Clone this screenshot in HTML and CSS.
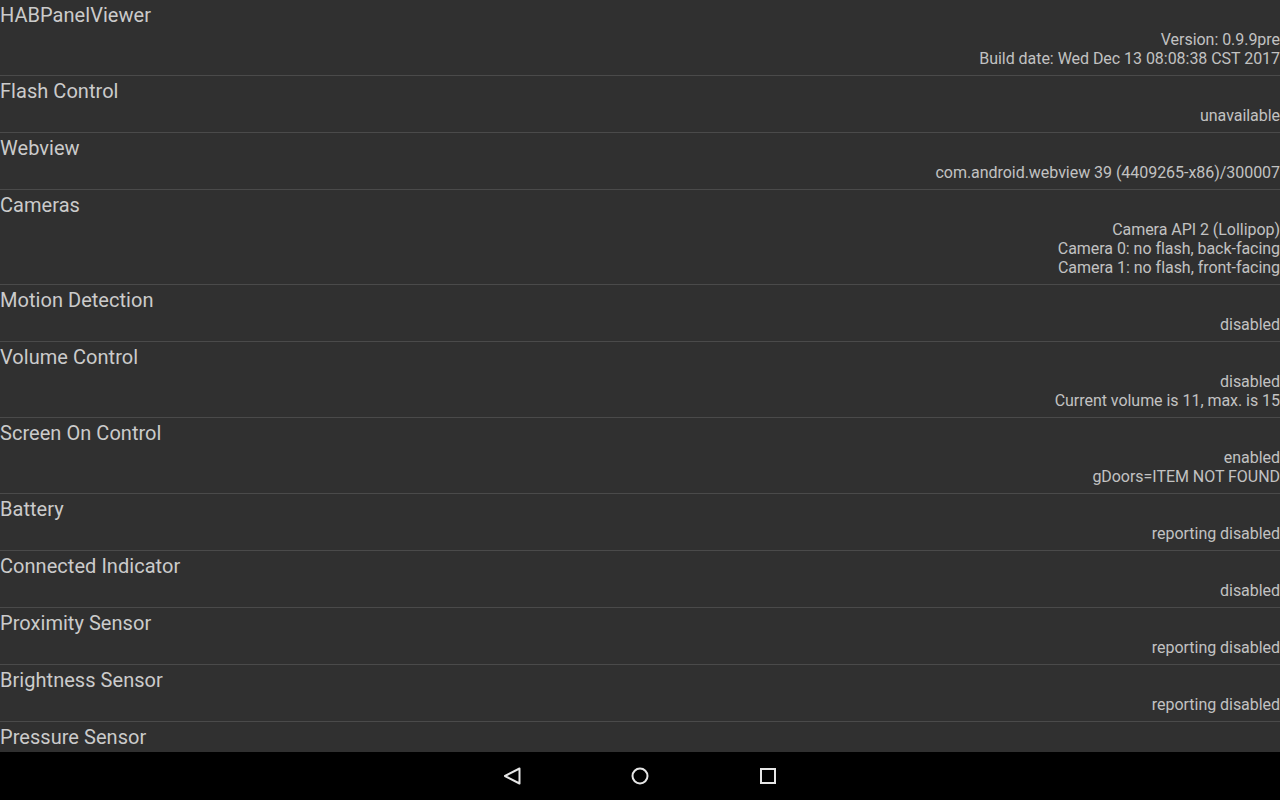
FILE: index.html
```html
<!DOCTYPE html>
<html>
<head>
<meta charset="utf-8">
<link rel="stylesheet" href="styles.css">
</head>
<body>
<div class="screen">
  <div class="list">
    <div class="row">
      <div class="title">HABPanelViewer</div>
      <div class="sub">Version: 0.9.9pre</div>
      <div class="sub">Build date: Wed Dec 13 08:08:38 CST 2017</div>
    </div>
    <div class="row">
      <div class="title">Flash Control</div>
      <div class="sub">unavailable</div>
    </div>
    <div class="row">
      <div class="title">Webview</div>
      <div class="sub">com.android.webview 39 (4409265-x86)/300007</div>
    </div>
    <div class="row">
      <div class="title">Cameras</div>
      <div class="sub">Camera API 2 (Lollipop)</div>
      <div class="sub">Camera 0: no flash, back-facing</div>
      <div class="sub">Camera 1: no flash, front-facing</div>
    </div>
    <div class="row">
      <div class="title">Motion Detection</div>
      <div class="sub">disabled</div>
    </div>
    <div class="row">
      <div class="title">Volume Control</div>
      <div class="sub">disabled</div>
      <div class="sub">Current volume is 11, max. is 15</div>
    </div>
    <div class="row">
      <div class="title">Screen On Control</div>
      <div class="sub">enabled</div>
      <div class="sub">gDoors=ITEM NOT FOUND</div>
    </div>
    <div class="row">
      <div class="title">Battery</div>
      <div class="sub">reporting disabled</div>
    </div>
    <div class="row">
      <div class="title">Connected Indicator</div>
      <div class="sub">disabled</div>
    </div>
    <div class="row">
      <div class="title">Proximity Sensor</div>
      <div class="sub">reporting disabled</div>
    </div>
    <div class="row">
      <div class="title">Brightness Sensor</div>
      <div class="sub">reporting disabled</div>
    </div>
    <div class="row">
      <div class="title">Pressure Sensor</div>
    </div>
  </div>
  <div class="navbar">
    <div class="navbtn">
      <svg width="24" height="24" viewBox="0 0 24 24"><path d="M19.5 4.5 L5 12 L19.5 19.5 Z" fill="none" stroke="#e6e6e6" stroke-width="2" stroke-linejoin="round"/></svg>
    </div>
    <div class="navbtn">
      <svg width="24" height="24" viewBox="0 0 24 24"><circle cx="12" cy="12" r="7.5" fill="none" stroke="#e6e6e6" stroke-width="2"/></svg>
    </div>
    <div class="navbtn">
      <svg width="24" height="24" viewBox="0 0 24 24"><rect x="5" y="5" width="14" height="14" fill="none" stroke="#e6e6e6" stroke-width="2"/></svg>
    </div>
  </div>
</div>
</body>
</html>
```

FILE: styles.css
```css
html, body {
  margin: 0;
  padding: 0;
  background: #303030;
  font-family: Roboto, "Noto Sans", sans-serif;
}
.screen {
  width: 1280px;
  height: 800px;
  display: flex;
  flex-direction: column;
  overflow: hidden;
}
.list {
  flex: 1;
  overflow: hidden;
  background: #303030;
}
.row {
  padding-top: 1px;
  padding-bottom: 7px;
  border-bottom: 1px solid #4a4a4a;
}
.title {
  font-size: 20px;
  line-height: 29px;
  letter-spacing: 0.04px;
  color: #cbcbcb;
}
.sub {
  font-size: 16px;
  line-height: 19px;
  letter-spacing: -0.04px;
  color: #c2c2c2;
  text-align: right;
}
.navbar {
  height: 48px;
  flex: none;
  background: #000;
  display: flex;
  justify-content: center;
  align-items: center;
}
.navbtn {
  width: 128px;
  height: 48px;
  display: flex;
  align-items: center;
  justify-content: center;
}
.navbtn svg {
  display: block;
}
```
